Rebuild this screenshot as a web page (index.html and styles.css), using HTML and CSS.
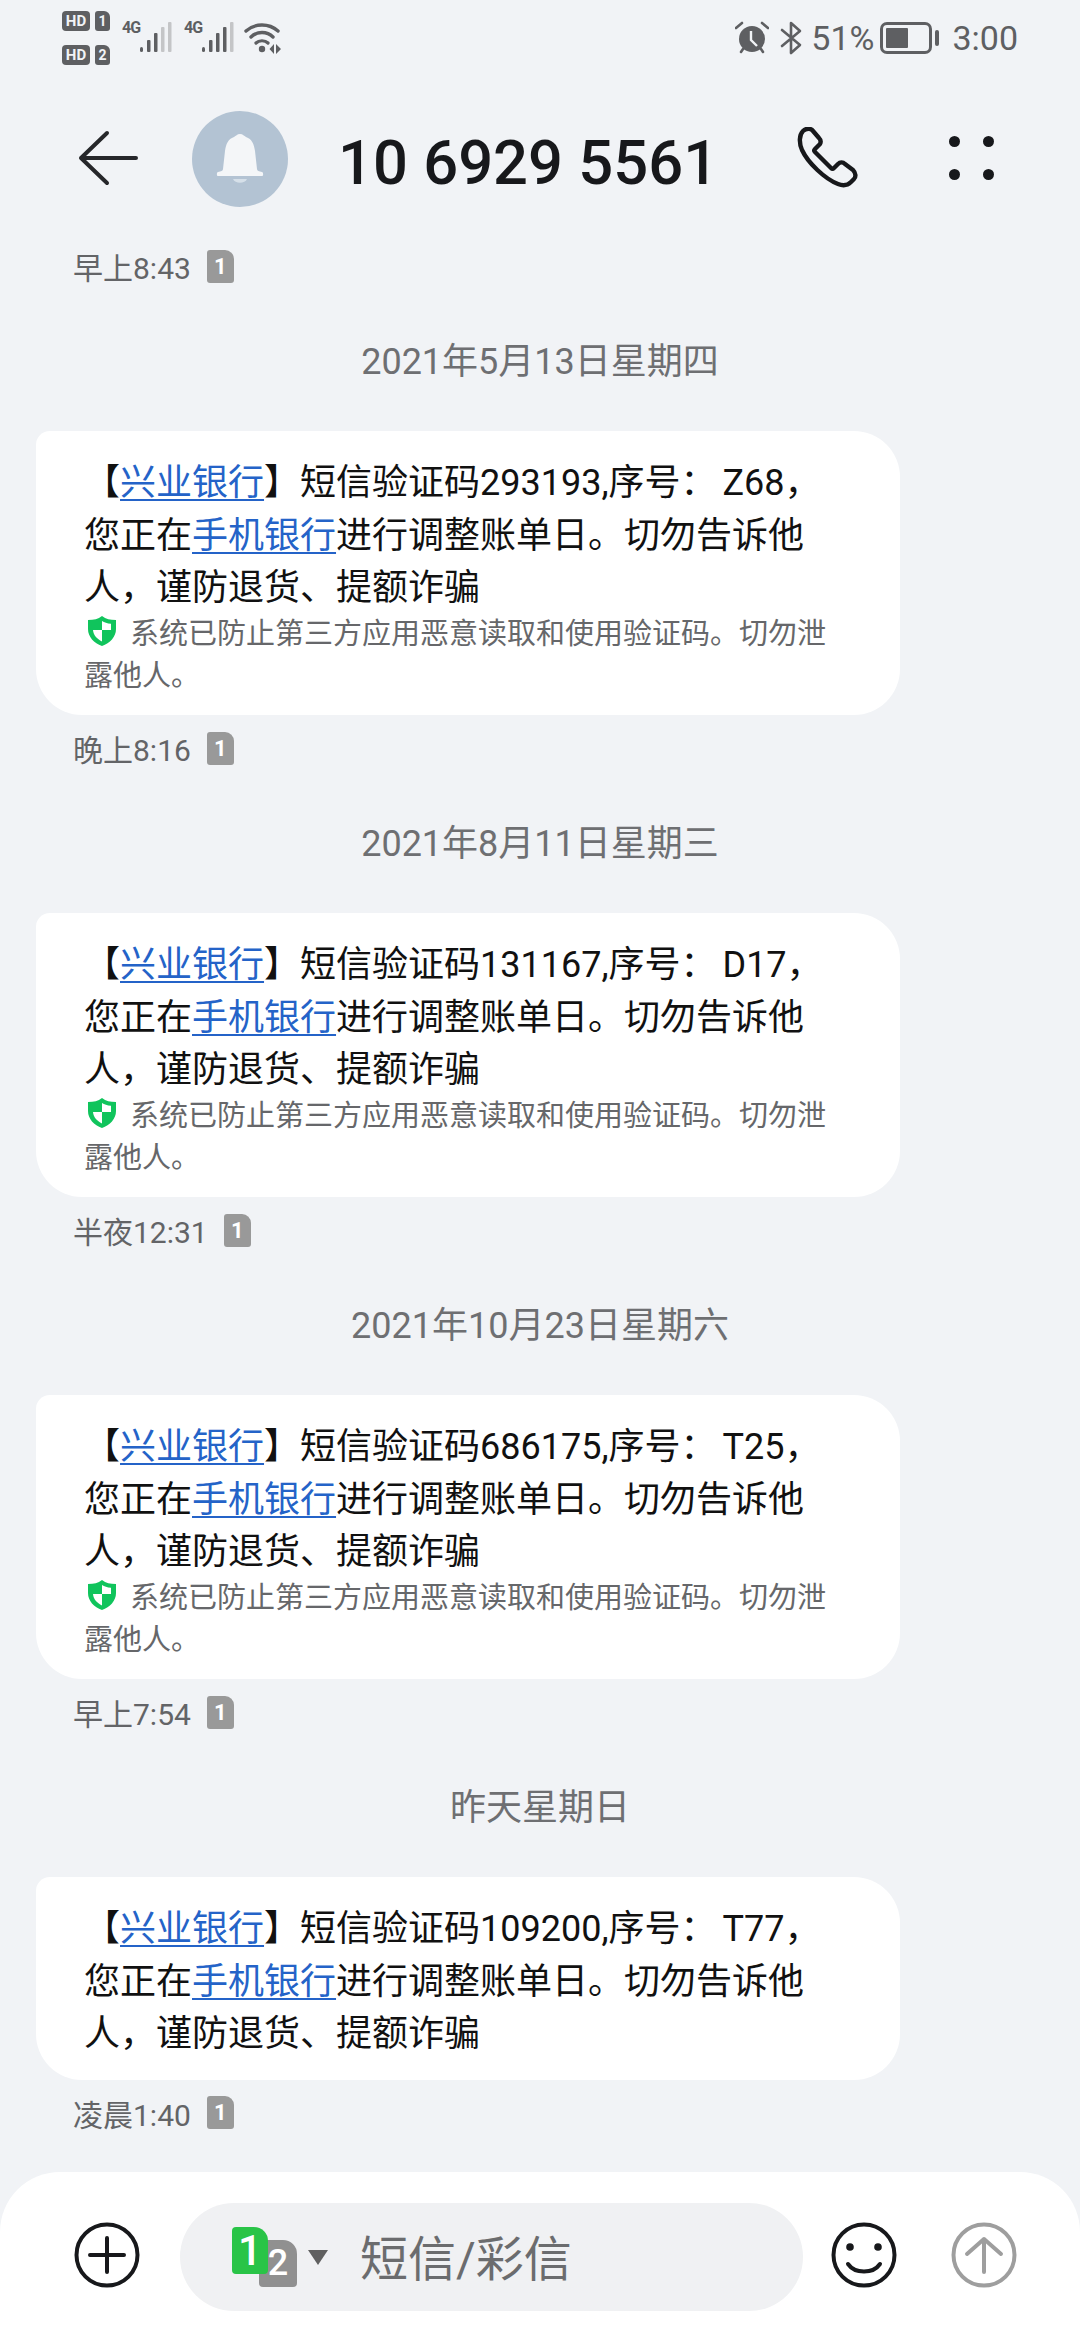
FILE: index.html
```html
<!DOCTYPE html>
<html lang="zh-CN">

<head>
    <meta charset="UTF-8">
    <title>10 6929 5561</title>
    <link rel="stylesheet" href="styles.css">
</head>

<body>
    <div class="statusbar">
        <div class="status-left">
            <div class="sim-stack">
                <div class="sim-row"><span class="hd">HD</span><span class="sim-tag">1</span></div>
                <div class="sim-row"><span class="hd">HD</span><span class="sim-tag">2</span></div>
            </div>
            <div class="signal">
                <span class="net">4G</span>
                <svg width="32" height="32" viewBox="0 0 32 32">
                    <rect x="0" y="25" width="3" height="5" rx="1.5" fill="#5e5f62" />
                    <rect x="7" y="18" width="3.5" height="12" rx="1" fill="#5e5f62" />
                    <rect x="14" y="11" width="3.5" height="19" rx="1" fill="#5e5f62" />
                    <rect x="21" y="5" width="3.5" height="25" rx="1" fill="#c4c5c7" />
                    <rect x="28" y="0" width="3.5" height="30" rx="1" fill="#c4c5c7" />
                </svg>
            </div>
            <div class="signal">
                <span class="net">4G</span>
                <svg width="32" height="32" viewBox="0 0 32 32">
                    <rect x="0" y="25" width="3" height="5" rx="1.5" fill="#5e5f62" />
                    <rect x="7" y="18" width="3.5" height="12" rx="1" fill="#5e5f62" />
                    <rect x="14" y="11" width="3.5" height="19" rx="1" fill="#5e5f62" />
                    <rect x="21" y="5" width="3.5" height="25" rx="1" fill="#5e5f62" />
                    <rect x="28" y="0" width="3.5" height="30" rx="1" fill="#c4c5c7" />
                </svg>
            </div>
            <svg class="wifi" width="40" height="34" viewBox="0 0 40 34">
                <path d="M2 9 C11 1 25 1 34 9" fill="none" stroke="#5e5f62" stroke-width="3.4" stroke-linecap="round" />
                <path d="M7 15 C13 9 23 9 29 15" fill="none" stroke="#5e5f62" stroke-width="3.4" stroke-linecap="round" />
                <path d="M12 21 C15 18 21 18 24 21" fill="none" stroke="#5e5f62" stroke-width="3.2" stroke-linecap="round" />
                <circle cx="18" cy="27" r="3.2" fill="#5e5f62" />
                <path d="M30 22 L25.500 27 L30 32 Z M32 22 L37 27 L32 32 Z" fill="#5e5f62" />
            </svg>
        </div>
        <div class="status-right">
            <svg width="34" height="34" viewBox="0 0 34 34">
                <circle cx="17" cy="18" r="13" fill="#5e5f62" />
                <path d="M1 7 L7 2 M33 7 L27 2 M6 31 L8 28 M28 31 L26 28" stroke="#5e5f62" stroke-width="2.6" stroke-linecap="round" />
                <path d="M16 10 V19 L22 25" fill="none" stroke="#f1f3f6" stroke-width="2.4" />
            </svg>
            <svg class="bt" width="22" height="36" viewBox="0 0 22 36">
                <path d="M2 10 L20 25 L11 33 V3 L20 11 L2 26" fill="none" stroke="#5e5f62" stroke-width="2.6" stroke-linejoin="round" stroke-linecap="round" />
            </svg>
            <span class="status-text">51%</span>
            <div class="battery">
                <div class="battery-body"><div class="battery-level"></div></div>
                <div class="battery-cap"></div>
            </div>
            <span class="status-text clock">3:00</span>
        </div>
    </div>

    <div class="topbar">
        <svg class="back" width="60" height="56" viewBox="0 0 60 56">
            <path d="M29 3 L3 28 L29 53 M3 28 H58" fill="none" stroke="#26272a" stroke-width="4" stroke-linecap="round" stroke-linejoin="round" />
        </svg>
        <div class="avatar">
            <svg width="48" height="52" viewBox="0 0 48 52">
                <path d="M24 1 C27 1 28 3 30 4 C36 6 38 11 39 18 L41 36 C41 38 43 38 46 39 C47.500 39.500 47.500 43 46 43 H2 C0.500 43 0.500 39.500 2 39 C5 38 7 38 7 36 L9 18 C10 11 12 6 18 4 C20 3 21 1 24 1 Z" fill="#f4f6f8" />
                <path d="M17 46 H31 C29 51 19 51 17 46 Z" fill="#d6e0e9" />
            </svg>
        </div>
        <div class="title">10 6929 5561</div>
        <svg class="phone" width="62" height="62" viewBox="0 0 62 62">
            <path d="M7 4 C10 1 15 1 17 4 L23 11 C25 13 25 15 24 17 L19 22 C18 23 18 24 19 25 L35 41 C36 42 37 42 38 41 L42 37 C44 35 47 35 49 37 L57 43 C60 46 60 50 58 52 L55 55 C52 58 47 59 42 57 C29 52 12 36 6 23 C3 16 3 8 7 4 Z" fill="none" stroke="#17181b" stroke-width="4.400" stroke-linejoin="round" />
        </svg>
        <div class="more">
            <span class="dot"></span><span class="dot"></span><span class="dot"></span><span class="dot"></span>
        </div>
    </div>

    <div class="thread">
        <div class="msg-time first"><span>早上8:43</span><span class="sim-badge">1</span></div>

        <div class="date">2021年5月13日星期四</div>
        <div class="bubble">
            <div class="sms">
                <div class="line"><span>【</span><a>兴业银行</a><span>】短信验证码293193,序号：</span><span class="code">Z68，</span></div>
                <div class="line"><span>您正在</span><a>手机银行</a><span>进行调整账单日。切勿告诉他</span></div>
                <div class="line">人，谨防退货、提额诈骗</div>
            </div>
            <div class="hint">
                <div class="hint-line"><svg class="shield" width="28" height="30" viewBox="0 0 28 30"><path d="M14 0 C18 3 22 4 28 4 V13 C28 21 22 27 14 30 C6 27 0 21 0 13 V4 C6 4 10 3 14 0 Z" fill="#10c45c" /><path d="M14 5 C16.500 6.500 19 7.500 23 7.800 V14 H14 Z M14 14 V25.500 C9 23 5.300 19 5 14 Z" fill="#fff" /></svg><span>系统已防止第三方应用恶意读取和使用验证码。切勿泄</span></div>
                <div class="hint-line">露他人。</div>
            </div>
        </div>
        <div class="msg-time"><span>晚上8:16</span><span class="sim-badge">1</span></div>

        <div class="date">2021年8月11日星期三</div>
        <div class="bubble">
            <div class="sms">
                <div class="line"><span>【</span><a>兴业银行</a><span>】短信验证码131167,序号：</span><span class="code">D17，</span></div>
                <div class="line"><span>您正在</span><a>手机银行</a><span>进行调整账单日。切勿告诉他</span></div>
                <div class="line">人，谨防退货、提额诈骗</div>
            </div>
            <div class="hint">
                <div class="hint-line"><svg class="shield" width="28" height="30" viewBox="0 0 28 30"><path d="M14 0 C18 3 22 4 28 4 V13 C28 21 22 27 14 30 C6 27 0 21 0 13 V4 C6 4 10 3 14 0 Z" fill="#10c45c" /><path d="M14 5 C16.500 6.500 19 7.500 23 7.800 V14 H14 Z M14 14 V25.500 C9 23 5.300 19 5 14 Z" fill="#fff" /></svg><span>系统已防止第三方应用恶意读取和使用验证码。切勿泄</span></div>
                <div class="hint-line">露他人。</div>
            </div>
        </div>
        <div class="msg-time"><span>半夜12:31</span><span class="sim-badge">1</span></div>

        <div class="date">2021年10月23日星期六</div>
        <div class="bubble">
            <div class="sms">
                <div class="line"><span>【</span><a>兴业银行</a><span>】短信验证码686175,序号：</span><span class="code">T25，</span></div>
                <div class="line"><span>您正在</span><a>手机银行</a><span>进行调整账单日。切勿告诉他</span></div>
                <div class="line">人，谨防退货、提额诈骗</div>
            </div>
            <div class="hint">
                <div class="hint-line"><svg class="shield" width="28" height="30" viewBox="0 0 28 30"><path d="M14 0 C18 3 22 4 28 4 V13 C28 21 22 27 14 30 C6 27 0 21 0 13 V4 C6 4 10 3 14 0 Z" fill="#10c45c" /><path d="M14 5 C16.500 6.500 19 7.500 23 7.800 V14 H14 Z M14 14 V25.500 C9 23 5.300 19 5 14 Z" fill="#fff" /></svg><span>系统已防止第三方应用恶意读取和使用验证码。切勿泄</span></div>
                <div class="hint-line">露他人。</div>
            </div>
        </div>
        <div class="msg-time"><span>早上7:54</span><span class="sim-badge">1</span></div>

        <div class="date">昨天星期日</div>
        <div class="bubble">
            <div class="sms">
                <div class="line"><span>【</span><a>兴业银行</a><span>】短信验证码109200,序号：</span><span class="code">T77，</span></div>
                <div class="line"><span>您正在</span><a>手机银行</a><span>进行调整账单日。切勿告诉他</span></div>
                <div class="line">人，谨防退货、提额诈骗</div>
            </div>
        </div>
        <div class="msg-time"><span>凌晨1:40</span><span class="sim-badge">1</span></div>
    </div>

    <div class="composer">
        <svg class="tool" width="66" height="66" viewBox="0 0 66 66">
            <circle cx="33" cy="33" r="30.500" fill="none" stroke="#17181b" stroke-width="4" />
            <path d="M33 16 V50 M16 33 H50" stroke="#17181b" stroke-width="4" stroke-linecap="round" />
        </svg>
        <div class="input-pill">
            <div class="sim-pick">
                <span class="pick pick-two">2</span>
                <span class="pick pick-one">1</span>
            </div>
            <span class="caret"></span>
            <span class="placeholder">短信/彩信</span>
        </div>
        <svg class="tool" width="66" height="66" viewBox="0 0 66 66">
            <circle cx="33" cy="33" r="30.500" fill="none" stroke="#17181b" stroke-width="4" />
            <circle cx="19" cy="25" r="3.800" fill="#17181b" />
            <circle cx="47" cy="25" r="3.800" fill="#17181b" />
            <path d="M17 42 C24 52 42 52 49 42" fill="none" stroke="#17181b" stroke-width="4" stroke-linecap="round" />
        </svg>
        <svg class="tool" width="66" height="66" viewBox="0 0 66 66">
            <circle cx="33" cy="33" r="30.500" fill="none" stroke="#9e9e9e" stroke-width="4" />
            <path d="M33 50 V17 M16 32 L33 17 L50 32" fill="none" stroke="#9e9e9e" stroke-width="4" stroke-linecap="round" stroke-linejoin="round" />
        </svg>
    </div>
</body>

</html>
```

FILE: styles.css
```css
* {
    box-sizing: border-box;
}

html,
body {
    margin: 0;
    height: 100%;
}

body {
    width: 1080px;
    height: 2340px;
    overflow: hidden;
    display: flex;
    flex-direction: column;
    background-color: #f1f3f6;
    font-family: "Roboto", "Noto Sans CJK SC", sans-serif;
    color: #000;
}

/* status bar */

.statusbar {
    height: 70px;
    padding: 8px 62px 0 62px;
    display: flex;
    justify-content: space-between;
    align-items: flex-start;
    color: #5e5f62;
}

.status-left,
.status-right {
    display: flex;
}

.status-left {
    align-items: flex-start;
}

.status-right {
    height: 60px;
    align-items: center;
    gap: 9px;
}

.sim-stack {
    display: flex;
    flex-direction: column;
    gap: 14px;
    width: 48px;
    margin-top: 3px;
}

.sim-row {
    display: flex;
    gap: 5px;
}

.hd {
    width: 28px;
    height: 20px;
    border-radius: 4px;
    background-color: #5e5f62;
    color: #f1f3f6;
    font-size: 15px;
    font-weight: 700;
    line-height: 20px;
    text-align: center;
}

.sim-tag {
    width: 15px;
    height: 20px;
    border-radius: 3px 6px 3px 3px;
    background-color: #5e5f62;
    color: #f1f3f6;
    font-size: 14px;
    font-weight: 700;
    line-height: 20px;
    text-align: center;
}

.signal {
    position: relative;
    display: flex;
    justify-content: flex-end;
    width: 50px;
    height: 32px;
    margin-left: 12px;
    margin-top: 14px;
}

.net {
    position: absolute;
    left: 0;
    top: -4px;
    font-size: 16px;
    font-weight: 700;
    line-height: 20px;
    letter-spacing: -1px;
}

.wifi {
    margin-left: 10px;
    margin-top: 14px;
}

.bt {
    margin-left: 2px;
}

.status-text {
    font-size: 34px;
    font-weight: 400;
}

.battery {
    display: flex;
    align-items: center;
    gap: 3px;
    margin-left: -3px;
}

.battery-body {
    width: 52px;
    height: 32px;
    border: 3px solid #5e5f62;
    border-radius: 7px;
    padding: 3px;
}

.battery-level {
    width: 55%;
    height: 100%;
    background-color: #5e5f62;
    border-radius: 1px;
}

.battery-cap {
    width: 4px;
    height: 16px;
    border-radius: 2px;
    background-color: #5e5f62;
}

.clock {
    margin-left: 4px;
}

/* title row */

.topbar {
    height: 136px;
    padding-left: 78px;
    padding-top: 41px;
    display: flex;
    align-items: flex-start;
}

.back {
    margin-top: 19px;
}

.avatar {
    width: 96px;
    height: 96px;
    margin-left: 54px;
    border-radius: 50%;
    background-color: #b3c3d3;
    display: flex;
    justify-content: center;
    align-items: center;
}

.title {
    margin-left: 50px;
    margin-top: 4px;
    width: 439px;
    font-size: 61.500px;
    font-weight: 500;
    line-height: 96px;
    color: #17181b;
}

.phone {
    margin-top: 16px;
    margin-left: 19px;
}

.more {
    width: 45px;
    margin-left: 91px;
    margin-top: 25px;
    display: grid;
    grid-template-columns: 11px 11px;
    justify-content: space-between;
    row-gap: 22px;
}

.dot {
    width: 11px;
    height: 11px;
    border-radius: 50%;
    background-color: #17181b;
}

/* messages */

.thread {
    flex: 1;
    padding: 0 36px;
}

.msg-time {
    display: flex;
    align-items: center;
    gap: 16px;
    height: 36px;
    margin-top: 15px;
    padding-left: 37px;
    font-size: 30px;
    color: #636467;
}

.msg-time.first {
    margin-top: 42px;
}

.sim-badge {
    width: 27px;
    height: 33px;
    border-radius: 3px 9px 3px 3px;
    background-color: #999;
    color: #fff;
    font-size: 22px;
    font-weight: 700;
    line-height: 33px;
    text-align: center;
}

.date {
    height: 44px;
    margin-top: 56px;
    margin-bottom: 47px;
    font-size: 36px;
    line-height: 44px;
    text-align: center;
    color: #6e6f72;
}

.bubble {
    width: 864px;
    padding: 26px 0 19px 48px;
    border-radius: 14px 46px 46px 46px;
    background-color: #fff;
}

.sms {
    font-size: 36px;
    line-height: 52.500px;
    color: #111;
}

.sms a {
    color: #2463c8;
    text-decoration: underline;
    text-underline-offset: 4px;
    text-decoration-thickness: 1.500px;
}

.code {
    margin-left: 6px;
}

.hint {
    margin-top: -5px;
    margin-bottom: 2.500px;
    font-size: 29px;
    color: #66676a;
}

.hint-line {
    display: flex;
    align-items: center;
    height: 42px;
}

.shield {
    margin-left: 4px;
    margin-right: 14px;
}

/* bottom bar */

.composer {
    height: 168px;
    padding: 31px 0 0 74px;
    display: flex;
    align-items: flex-start;
    border-radius: 60px 60px 0 0;
    background-color: #fff;
}

.tool {
    margin-top: 19px;
}

.input-pill {
    width: 623px;
    height: 108px;
    margin-left: 40px;
    margin-right: 28px;
    padding-left: 52px;
    display: flex;
    align-items: center;
    border-radius: 54px;
    background-color: #f0f1f3;
}

.composer .tool:last-child {
    margin-left: 54px;
}

.sim-pick {
    position: relative;
    width: 65px;
    height: 60px;
}

.pick {
    position: absolute;
    height: 47px;
    border-radius: 4px 14px 4px 4px;
    color: #fff;
    font-weight: 500;
    line-height: 47px;
    text-align: center;
}

.pick-one {
    left: 0;
    top: 0;
    width: 36px;
    font-size: 42px;
    background-color: #29c447;
}

.pick-two {
    left: 27px;
    top: 13px;
    width: 38px;
    font-size: 36px;
    background-color: #909090;
}

.caret {
    width: 0;
    height: 0;
    margin-left: 11px;
    margin-right: 32px;
    border-left: 10px solid transparent;
    border-right: 10px solid transparent;
    border-top: 15px solid #606060;
}

.placeholder {
    margin-top: -5px;
    font-size: 48px;
    color: #6b6c6e;
}
```
